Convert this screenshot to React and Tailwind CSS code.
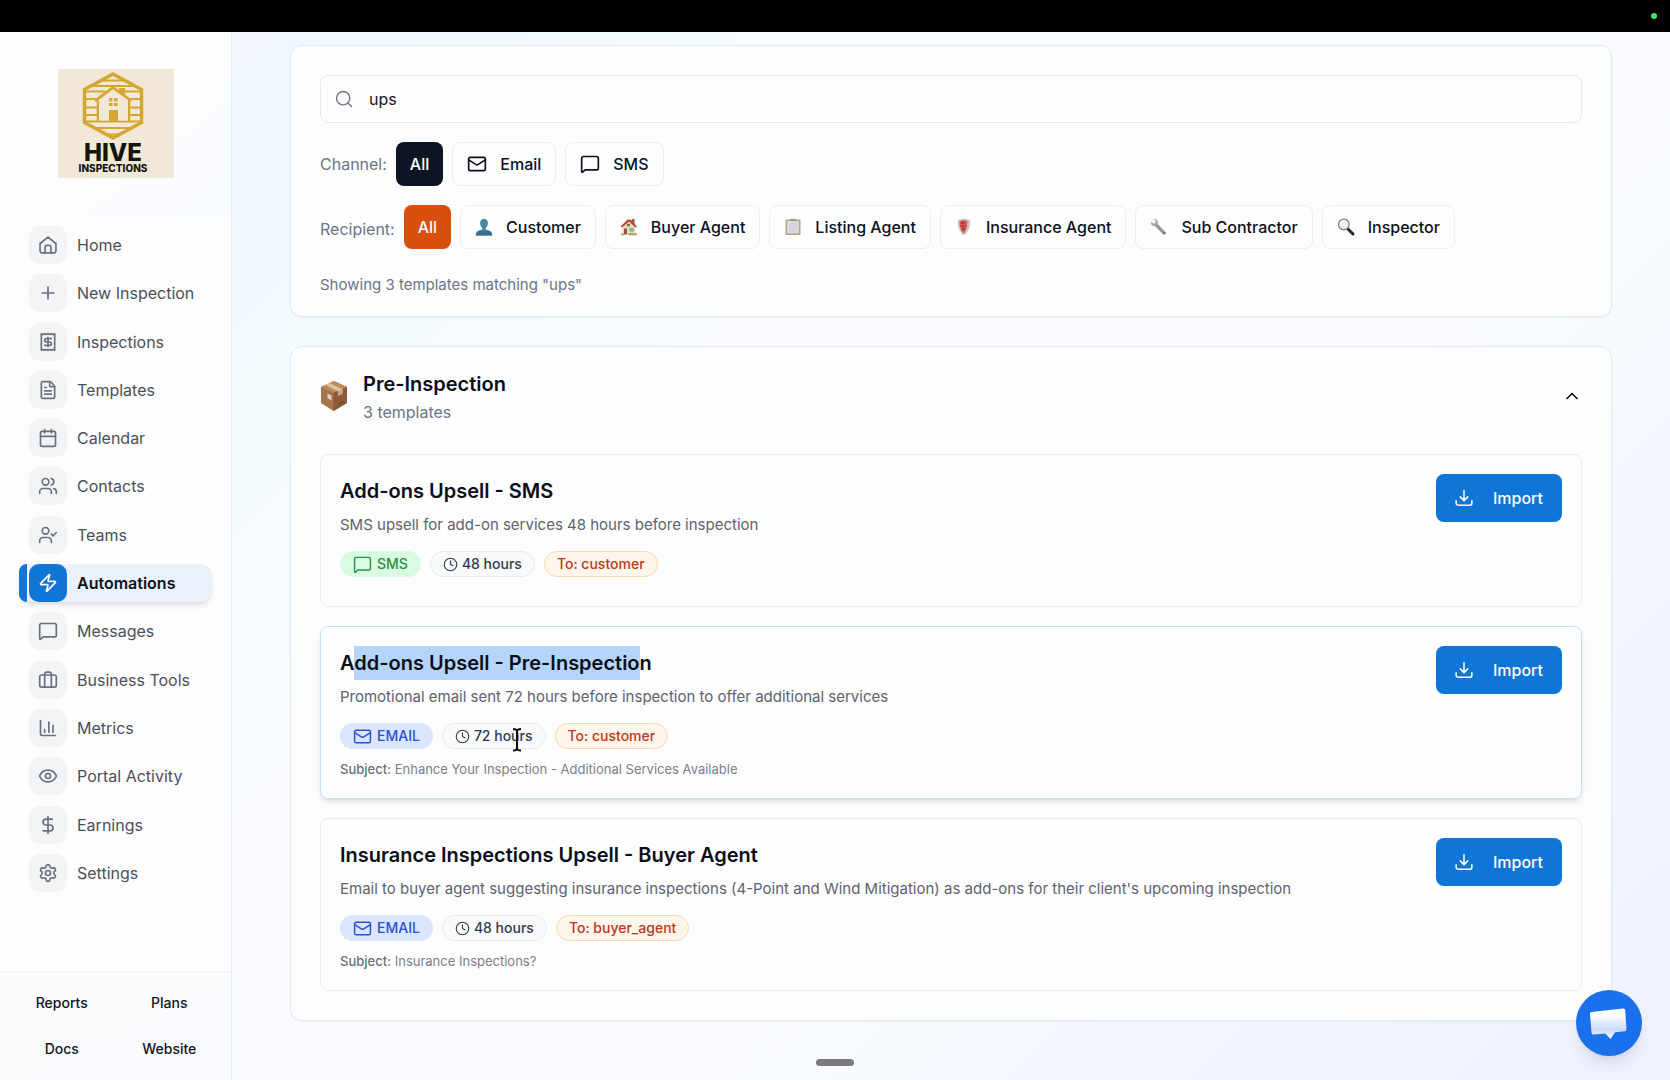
import React, { useState } from "react";
import {
  Plus,
  Receipt,
  FileText,
  Calendar,
  Users,
  UserCheck,
  Zap,
  MessageSquare,
  ChartColumn,
  Eye,
  DollarSign,
  Settings,
  Search,
  Mail,
  Clock,
  ChevronUp,
} from "lucide-react";

/* ---------- Icons ---------- */

function Stroke({ className, children }) {
  return (
    <svg
      viewBox="0 0 24 24"
      fill="none"
      stroke="currentColor"
      strokeWidth="2"
      strokeLinecap="round"
      strokeLinejoin="round"
      className={className}
      aria-hidden="true"
    >
      {children}
    </svg>
  );
}

const HomeIcon = ({ className }) => (
  <Stroke className={className}>
    <path d="M2.5 10.2 12 2.5l9.5 7.7V19a2.5 2.5 0 0 1-2.5 2.5H5A2.5 2.5 0 0 1 2.5 19z" />
    <path d="M8.5 21.5v-7a2 2 0 0 1 2-2h3a2 2 0 0 1 2 2v7" />
  </Stroke>
);

const SuitcaseIcon = ({ className }) => (
  <Stroke className={className}>
    <rect x="2" y="6" width="20" height="14.5" rx="2.5" />
    <path d="M8 20.5V5a2.5 2.5 0 0 1 2.5-2.5h3A2.5 2.5 0 0 1 16 5v15.5" />
  </Stroke>
);

const ImportIcon = ({ className }) => (
  <Stroke className={className}>
    <path d="M12 2v13M7 10.5l5 5 5-5" />
    <path d="M1.5 15.5V19A2.5 2.5 0 0 0 4 21.5h16a2.5 2.5 0 0 0 2.5-2.5v-3.5" />
  </Stroke>
);

const PersonGlyph = () => (
  <svg viewBox="0 0 18 18" className="size-[18px]" aria-hidden="true">
    <path d="M9 .8c2.4 0 3.9 1.8 3.9 4.2 0 2.2-.9 4-2.1 4.9v1.5c2.6.6 6.2 1.5 6.4 6H.8c.2-4.5 3.8-5.4 6.400-6V9.9C6 9 5.100 7.200 5.100 5 5.100 2.600 6.600.8 9 .8z" fill="#4a86a8" />
    <path d="M.8 17.4c.1-2 1-3.5 2.5-4.4h11.4c1.500.9 2.400 2.400 2.500 4.400z" fill="#3a708f" />
  </svg>
);

const HouseGlyph = () => (
  <svg viewBox="0 0 18 18" className="size-[18px]" aria-hidden="true">
    <path d="M12 1h2.5v5H12z" fill="#8d5a4a" />
    <path d="M2.5 8 8 3l7 5v8.5H2.5z" fill="#ecd9ae" />
    <path d="M.8 8.5 7.5 1.5 11 1.8l6 7-1.5.6L9 3.5 2 9.5z" fill="#b5443a" />
    <path d="M4 10.5h3v6H4z" fill="#8a5a3c" />
    <path d="M9.5 10h4v3.5h-4z" fill="#6db3c9" />
    <path d="M7 5.8h3v2.4H7z" fill="#7a6a5a" />
    <path d="M1 15.5h3v1.7H1zM8.5 15.3H17v2H8.5z" fill="#b09a62" />
  </svg>
);

const ClipboardGlyph = () => (
  <svg viewBox="0 0 18 18" className="size-[18px]" aria-hidden="true">
    <rect x="1.5" y="1.5" width="15" height="15.5" rx="1" fill="#b8a88c" />
    <path d="M3.2 3h11.6v12.3H3.2z" fill="#dcdee2" />
    <path d="M5 6h8M5 8.5h8M5 11h8M5 13.3h5" stroke="#c3c7ce" strokeWidth="0.8" />
    <path d="M6 .8h6v2.4H6z" fill="#9b9da2" />
  </svg>
);

const ShieldGlyph = () => (
  <svg viewBox="0 0 18 18" className="size-[18px]" aria-hidden="true">
    <path d="M9 .5c2 .9 4 1.3 6 1.3.5 6-.8 12-6 15.7C3.8 13.8 2.5 7.8 3 1.8 5 1.8 7 1.4 9 .5z" fill="#c3c8cc" />
    <path d="M8.5 2c1.2.5 2.5.8 3.8.9.2 4.8-.6 9.3-3.8 12.5C5.3 12.3 4.3 7.8 4.5 3 6 2.9 7.3 2.6 8.5 2z" fill="#d9584a" />
    <path d="M6 5h3.5M6.3 8h3M7 11h2.5" stroke="#5e3230" />
  </svg>
);

const WrenchGlyph = () => (
  <svg viewBox="0 0 18 18" className="size-[18px]" aria-hidden="true">
    <path d="M3.5.8 5.8 3.3 5 5.2l-1.9.4L.9 3.5C.4 6 2 8.2 4.7 8l8.2 8.3c1.7 1.6 4-.5 2.7-2.3L7.9 6C8.3 3 6.3.7 3.5.8z" fill="#a4a6a9" />
    <path d="m6.5 7.5 7.5 7.8" stroke="#7c7e82" />
    <circle cx="14.2" cy="15" r="0.9" fill="#5f6063" />
  </svg>
);

const MagnifierGlyph = () => (
  <svg viewBox="0 0 18 18" className="size-[18px]" aria-hidden="true">
    <path d="m10.5 10.5 5.5 5.5" stroke="#26282b" strokeWidth="3" strokeLinecap="round" />
    <circle cx="6.8" cy="6.5" r="5.3" fill="#eef2f4" stroke="#7b7d80" strokeWidth="1.2" />
    <path d="M4 6.5A3 3 0 0 1 6.8 3.5" stroke="#fff" fill="none" />
  </svg>
);

const PackageGlyph = () => (
  <svg viewBox="0 0 28 32" className="h-8 w-7 shrink-0" aria-hidden="true">
    <path d="M14 1 27 7v16L13.5 31 1 23V7z" fill="#a77349" />
    <path d="M14 1 27 7 13.5 13 1 7z" fill="#bd8a5c" />
    <path d="M13.5 13 27 7v16l-13.5 8z" fill="#8c5a38" />
    <path d="m9.5 3 13 6.3v4.5l-4.5 2v-4.5L5.5 5z" fill="#dcc39c" />
    <path d="m18 11.3 4.5-2v4.5l-4.5 2z" fill="#c4a780" />
    <path d="m7.5 13.5 4 2v5l-4-2.300z" fill="#d9d2c8" />
    <path d="M20 22.5v2M22.5 21v2" stroke="#5d3a22" />
  </svg>
);

function HiveLogo() {
  return (
    <svg
      viewBox="0 0 116 109"
      className="h-[109px] w-[116px]"
      role="img"
      aria-label="Hive Inspections"
    >
      <rect width="116" height="109" fill="#f1e8d8" />
      <g fill="none" stroke="#d6a632">
        <path d="M55 5 83.5 20.5v33L55 69 26.5 53.5v-33z" strokeWidth="3.5" />
        <path
          d="M44 11.500h22M34 17h42M27 22.500h20M67 22.500h17M27 30h14M72 30h12M27 38.500h13M70 38.500h14M27 46h13M70 46h14M27 52.500h57M36 59h38M48 65.500h14"
          strokeWidth="2"
        />
        <path d="M40 53V32M71 53V32" strokeWidth="2.5" />
        <path d="M37 32 55 18.5 73 32" strokeWidth="3" />
      </g>
      <path d="M41 51.5V31l14-10.500L70 31v20.5z" fill="#f1e8d8" />
      <path
        d="M61 19h6v9l-6-4.500zM51 41h9v11h-9zM51 29h3.500v3.500H51zM56 29h3.500v3.500H56zM51 34h3.500v3H51zM56 34h3.500v3H56z"
        fill="#d6a632"
      />
      <text
        x="55"
        y="92"
        textAnchor="middle"
        className="font-['Inter'] text-[24px] font-extrabold"
        fill="#14140f"
      >
        HIVE
      </text>
      <text
        x="55"
        y="103"
        textAnchor="middle"
        className="font-['Inter'] text-[10px] font-extrabold"
        fill="#14140f"
      >
        INSPECTIONS
      </text>
    </svg>
  );
}

/* ---------- Data ---------- */

const NAV_ITEMS = [
  { label: "Home", icon: HomeIcon },
  { label: "New Inspection", icon: Plus },
  { label: "Inspections", icon: Receipt },
  { label: "Templates", icon: FileText },
  { label: "Calendar", icon: Calendar },
  { label: "Contacts", icon: Users },
  { label: "Teams", icon: UserCheck },
  { label: "Automations", icon: Zap },
  { label: "Messages", icon: MessageSquare },
  { label: "Business Tools", icon: SuitcaseIcon },
  { label: "Metrics", icon: ChartColumn },
  { label: "Portal Activity", icon: Eye },
  { label: "Earnings", icon: DollarSign },
  { label: "Settings", icon: Settings },
];

const CHANNELS = [
  { label: "Email", icon: Mail },
  { label: "SMS", icon: MessageSquare },
];

const RECIPIENTS = [
  { label: "Customer", icon: PersonGlyph },
  { label: "Buyer Agent", icon: HouseGlyph },
  { label: "Listing Agent", icon: ClipboardGlyph },
  { label: "Insurance Agent", icon: ShieldGlyph },
  { label: "Sub Contractor", icon: WrenchGlyph },
  { label: "Inspector", icon: MagnifierGlyph },
];

const TEMPLATES = [
  {
    title: "Add-ons Upsell - SMS",
    description: "SMS upsell for add-on services 48 hours before inspection",
    channel: "SMS",
    delay: "48 hours",
    to: "customer",
  },
  {
    title: (
      <>
        A<span className="bg-[#b5d5fb] py-[5px]">dd-ons Upsell - Pre-Inspectio</span>n
      </>
    ),
    description:
      "Promotional email sent 72 hours before inspection to offer additional services",
    channel: "EMAIL",
    delay: "72 hours",
    to: "customer",
    subject: "Enhance Your Inspection - Additional Services Available",
    hovered: true,
  },
  {
    title: "Insurance Inspections Upsell - Buyer Agent",
    description:
      "Email to buyer agent suggesting insurance inspections (4-Point and Wind Mitigation) as add-ons for their client's upcoming inspection",
    channel: "EMAIL",
    delay: "48 hours",
    to: "buyer_agent",
    subject: "Insurance Inspections?",
  },
];

/* ---------- Sidebar ---------- */

function NavItem({ label, icon: Icon, active }) {
  if (active) {
    return (
      <a
        href="#"
        className="flex h-[38px] items-center rounded-xl bg-[#ebf1fb] text-base font-semibold text-[#0b1120] shadow-md"
      >
        <span className="mr-[2px] h-full w-2 rounded-l-xl bg-[#0f75d6]" />
        <span className="mr-[10px] flex size-[38px] items-center justify-center rounded-[10px] bg-[#0f75d6] text-white">
          <Icon className="size-5" />
        </span>
        {label}
      </a>
    );
  }
  return (
    <a
      href="#"
      className="flex h-[38px] items-center gap-[10px] pl-[10px] text-base text-[#4b5059]"
    >
      <span className="flex size-[38px] items-center justify-center rounded-[10px] bg-[#f3f4f6] text-[#6b7080]">
        <Icon className="size-5" />
      </span>
      {label}
    </a>
  );
}

function Sidebar() {
  return (
    <aside className="flex w-[232px] shrink-0 flex-col border-r border-[#e8edf3] bg-[#fdfdfe]">
      <div className="flex h-[185px] justify-center bg-gradient-to-br from-[#fdfdfe] from-50% to-[#f8fbff] pt-[37px]">
        <HiveLogo />
      </div>
      <nav className="flex grow flex-col justify-between pt-[9px] pr-[19px] pb-[79px] pl-[19px]">
        {NAV_ITEMS.map((item) => (
          <NavItem key={item.label} {...item} active={item.label === "Automations"} />
        ))}
      </nav>
      <div className="grid h-[109px] grid-cols-2 border-t border-[#f1f2f4] bg-gradient-to-br from-[#fbfbfc] to-[#fafcff] px-2 py-2 text-center text-sm font-medium text-[#10141f]">
        {["Reports", "Plans", "Docs", "Website"].map((label) => (
          <a key={label} href="#" className="flex items-center justify-center">
            {label}
          </a>
        ))}
      </div>
    </aside>
  );
}

/* ---------- Filters ---------- */

function FilterButton({ label, icon: Icon }) {
  return (
    <button
      type="button"
      className="flex h-11 items-center gap-[13px] rounded-lg border border-[#eceff2] bg-[#fdfdfe] px-[14px] text-base font-medium text-[#0b101c]"
    >
      <Icon className="size-5" />
      {label}
    </button>
  );
}

function Filters() {
  const [query, setQuery] = useState("ups");

  return (
    <section className="rounded-xl border border-[#e3ebf2] bg-[#fdfdfe] px-[29px] pt-[29px] pb-[19px] shadow-xs">
      <label className="flex h-12 items-center gap-[15px] rounded-lg border border-[#e4eaec] px-[13px]">
        <Search className="size-5 text-[#6f7789]" strokeWidth={1.7} />
        <input
          type="text"
          aria-label="Search templates"
          value={query}
          onChange={(e) => setQuery(e.target.value)}
          className="grow bg-transparent text-base text-[#14171f] outline-none"
        />
      </label>

      <div className="mt-[19px] flex items-center gap-[9px] text-base text-[#6b7588]">
        <span>Channel:</span>
        <button
          type="button"
          className="h-11 rounded-lg bg-[#0d1524] px-[14px] font-medium text-white"
        >
          All
        </button>
        {CHANNELS.map((c) => (
          <FilterButton key={c.label} {...c} />
        ))}
      </div>

      <div className="mt-[19px] flex flex-wrap items-center gap-[9px] text-base text-[#6b7588]">
        <span className="pt-1">Recipient:</span>
        <button
          type="button"
          className="h-11 rounded-lg bg-[#d94e0b] px-[14px] font-medium text-white"
        >
          All
        </button>
        {RECIPIENTS.map((r) => (
          <FilterButton key={r.label} {...r} />
        ))}
      </div>

      <p className="mt-6 text-[15px] leading-6 text-[#6b7588]">
        Showing 3 templates matching "ups"
      </p>
    </section>
  );
}

/* ---------- Templates ---------- */

function ChannelBadge({ channel }) {
  if (channel === "SMS") {
    return (
      <span className="flex h-[26px] items-center gap-[5px] rounded-full bg-[#d9fbe2] px-[13px] text-[#2c8f45]">
        <MessageSquare className="size-[19px]" strokeWidth={1.8} />
        SMS
      </span>
    );
  }
  return (
    <span className="flex h-[26px] items-center gap-[5px] rounded-full bg-[#d9e6fd] px-[13px] text-[#2b4fd0]">
      <Mail className="size-[19px]" strokeWidth={1.8} />
      EMAIL
    </span>
  );
}

function TemplateCard({ title, description, channel, delay, to, subject, hovered }) {
  return (
    <article
      className={`flex items-start justify-between rounded-lg border p-[19px] ${
        hovered ? "border-[#c9defa] shadow-md" : "border-[#e9ecef]"
      }`}
    >
      <div>
        <h3 className="text-xl leading-[34px] font-semibold text-[#0a0e1a]">
          {title}
        </h3>
        <p className="mt-[5px] text-[15px] leading-6 text-[#5d636e]">{description}</p>
        <div className="mt-[14px] mb-[10px] flex gap-[9px] text-sm font-medium">
          <ChannelBadge channel={channel} />
          <span className="flex h-[26px] items-center gap-1 rounded-full border border-[#e7eaee] bg-[#f8fafb] px-3 text-[#333b48]">
            <Clock className="size-[15px]" strokeWidth={1.8} />
            {delay}
          </span>
          <span className="flex h-[26px] items-center rounded-full border border-[#fbd9b0] bg-[#fff5ea] px-3 text-[#b93a1c]">
            To: {to}
          </span>
        </div>
        {subject && (
          <p className="text-[13px] leading-5 text-[#7b808a]">
            <span className="font-medium text-[#6b7079]">Subject:</span> {subject}
          </p>
        )}
      </div>
      <button
        type="button"
        className="flex h-12 shrink-0 items-center gap-5 rounded-lg bg-[#0f75d6] px-[19px] text-base font-medium text-white"
      >
        <ImportIcon className="size-[18px]" />
        Import
      </button>
    </article>
  );
}

function TemplateGroup() {
  return (
    <section className="mt-[29px] rounded-xl border border-[#e3ebf2] bg-[#fdfdfe] px-[29px] pt-[21px] pb-[29px] shadow-xs">
      <div className="mb-[30px] flex items-center justify-between">
        <div className="flex items-center gap-[15px]">
          <PackageGlyph />
          <div>
            <h2 className="text-xl leading-8 font-semibold text-[#0a0e1a]">
              Pre-Inspection
            </h2>
            <p className="text-base leading-6 text-[#6b7588]">3 templates</p>
          </div>
        </div>
        <button type="button" aria-label="Collapse" className="text-[#10141f]">
          <ChevronUp className="size-5" />
        </button>
      </div>
      <div className="flex flex-col gap-[19px]">
        {TEMPLATES.map((t) => (
          <TemplateCard key={t.description} {...t} />
        ))}
      </div>
    </section>
  );
}

/* ---------- Overlays ---------- */

function TextCursor() {
  return (
    <svg
      viewBox="0 0 12 26"
      className="absolute top-[727px] left-[511px] h-[26px] w-3"
      fill="none"
      aria-hidden="true"
    >
      <path
        d="M2 2c2 0 4 .8 4 2.5V21c0 1.7-2 2.5-4 2.5M10 2C8 2 6 2.8 6 4.5V21c0 1.7 2 2.5 4 2.5"
        stroke="#111"
        strokeWidth="2"
      />
    </svg>
  );
}

function ChatButton() {
  return (
    <button
      type="button"
      aria-label="Open chat"
      className="absolute right-[28px] bottom-6 size-[66px] rounded-full bg-[#1b70ee] shadow-lg"
    >
      <svg viewBox="0 0 66 66" className="size-[66px]" aria-hidden="true">
        <defs>
          <linearGradient id="bubble" x1="0" y1="0" x2="0" y2="1">
            <stop offset="0.2" stopColor="#ffffff" />
            <stop offset="0.7" stopColor="#c9dafa" />
            <stop offset="1" stopColor="#ffffff" />
          </linearGradient>
        </defs>
        <path
          d="M15.5 22 47 18.5c1.5 0 2 .7 2.2 1.8L50.5 39c0 1.4-.6 2-1.8 2.2L39 42.3l-4.5 6.700-5.300-5.500-11.500 1c-1.400 0-2-.6-2.200-1.800L14 24c0-1.200.4-1.900 1.5-2z"
          fill="url(#bubble)"
        />
      </svg>
    </button>
  );
}

function App() {
  return (
    <div className="relative flex min-h-screen flex-col font-['Inter',sans-serif]">
      <header className="flex h-8 items-center justify-end bg-black pr-[13px]">
        <span className="size-1.5 rounded-full bg-[#3fe85f]" />
      </header>
      <div className="flex grow">
        <Sidebar />
        <main className="flex grow flex-col bg-[linear-gradient(135deg,#f1f6ff_0%,#f3fbff_15%,#fbfcff_35%,#fafcff_60%,#f3f6ff_80%,#edf2fe_100%)] px-[58px] pt-[13px]">
          <Filters />
          <TemplateGroup />
        </main>
      </div>
      <TextCursor />
      <ChatButton />
      <div className="absolute bottom-[14px] left-1/2 h-[7px] w-[38px] -translate-x-1/2 rounded-full bg-[#7c7c80]" />
    </div>
  );
}

export default App;
